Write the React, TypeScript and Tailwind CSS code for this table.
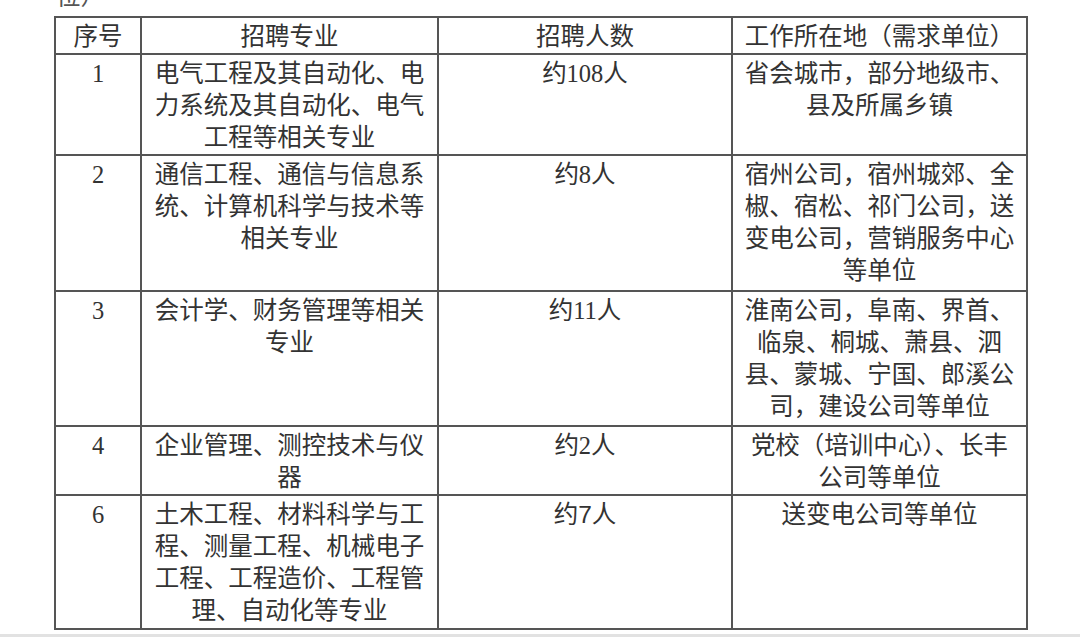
import React from "react";

const rows: { no: string; major: React.ReactNode; count: React.ReactNode; place: string; h: string }[] = [
  {
    no: "1",
    major: "电气工程及其自动化、电力系统及其自动化、电气工程等相关专业",
    count: "约108人",
    place: "省会城市，部分地级市、县及所属乡镇",
    h: "h-[101px]",
  },
  {
    no: "2",
    major: "通信工程、通信与信息系统、计算机科学与技术等相关专业",
    count: "约8人",
    place: "宿州公司，宿州城郊、全椒、宿松、祁门公司，送变电公司，营销服务中心等单位",
    h: "h-[136px]",
  },
  {
    no: "3",
    major: "会计学、财务管理等相关专业",
    count: "约11人",
    place: "淮南公司，阜南、界首、临泉、桐城、萧县、泗县、蒙城、宁国、郎溪公司，建设公司等单位",
    h: "h-[135px]",
  },
  {
    no: "4",
    major: "企业管理、测控技术与仪器",
    count: "约2人",
    place: "党校（培训中心）、长丰公司等单位",
    h: "h-[68px]",
  },
  {
    no: "6",
    major: "土木工程、材料科学与工程、测量工程、机械电子工程、工程造价、工程管理、自动化等专业",
    count: (
      <>
        约<span className="font-['Liberation_Sans','Noto_Sans_CJK_SC',sans-serif]">7</span>人
      </>
    ),
    place: "送变电公司等单位",
    h: "h-[134px]",
  },
];

const cell =
  "border-2 border-[#555555] align-top text-center pt-[3px] px-[6px] leading-[32px]";

export default function App() {
  return (
    <div className="w-[1080px] h-[637px] bg-white flex flex-col overflow-hidden font-['Liberation_Serif','Noto_Sans_CJK_SC',serif] text-[24.5px] text-[#333333]">
      <div className="h-[16px] shrink-0 overflow-hidden pl-[56px]">
        <div className="leading-[33px] -mt-[22px] font-['Noto_Sans_CJK_SC',sans-serif] text-[#555555]">位）</div>
      </div>
      <div className="pl-[54px] flex-1 min-h-0">
        <table className="border-collapse table-fixed w-[972px]">
          <colgroup>
            <col className="w-[86px]" />
            <col className="w-[297px]" />
            <col className="w-[294px]" />
            <col className="w-[295px]" />
          </colgroup>
          <thead>
            <tr className="h-[37px]">
              <th className="border-2 border-[#555555] font-normal text-center align-middle leading-[32px] pt-[2px] px-[4px]">序号</th>
              <th className="border-2 border-[#555555] font-normal text-center align-middle leading-[32px] pt-[2px]">招聘专业</th>
              <th className="border-2 border-[#555555] font-normal text-center align-middle leading-[32px] pt-[2px]">招聘人数</th>
              <th className="border-2 border-[#555555] font-normal text-center align-middle leading-[32px] pt-[2px] px-[4px]">工作所在地（需求单位）</th>
            </tr>
          </thead>
          <tbody>
            {rows.map((r) => (
              <tr key={r.no} className={r.h}>
                <td className={cell}>{r.no}</td>
                <td className={cell}>{r.major}</td>
                <td className={cell}>{r.count}</td>
                <td className={cell}>{r.place}</td>
              </tr>
            ))}
          </tbody>
        </table>
      </div>
      <div className="h-[3px] shrink-0 bg-[#e2e2e2]" />
    </div>
  );
}
